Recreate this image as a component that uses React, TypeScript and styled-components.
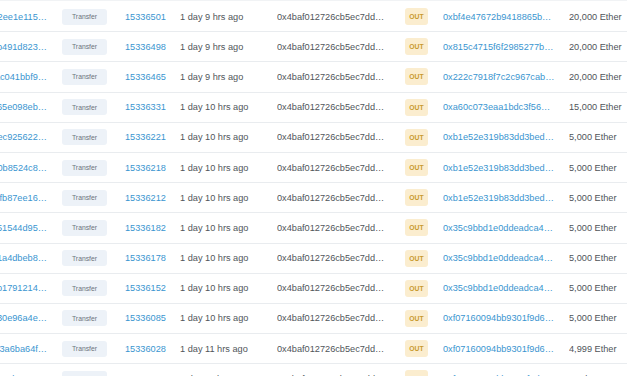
import styled, { createGlobalStyle } from "styled-components";

type TxRow = {
  hash: string;
  block: string;
  age: string;
  to: string;
  value: string;
};

const FROM = "0x4baf012726cb5ec7dd…";

const rows: TxRow[] = [
  { hash: "0x7c2ee1e115…", block: "15336501", age: "1 day 9 hrs ago", to: "0xbf4e47672b9418865b…", value: "20,000 Ether" },
  { hash: "0x1fb491d823…", block: "15336498", age: "1 day 9 hrs ago", to: "0x815c4715f6f2985277b…", value: "20,000 Ether" },
  { hash: "0x9ac041bbf9…", block: "15336465", age: "1 day 9 hrs ago", to: "0x222c7918f7c2c967cab…", value: "20,000 Ether" },
  { hash: "0x3d65e098eb…", block: "15336331", age: "1 day 10 hrs ago", to: "0xa60c073eaa1bdc3f56…", value: "15,000 Ether" },
  { hash: "0x28ec925622…", block: "15336221", age: "1 day 10 hrs ago", to: "0xb1e52e319b83dd3bed…", value: "5,000 Ether" },
  { hash: "0x6e0b8524c8…", block: "15336218", age: "1 day 10 hrs ago", to: "0xb1e52e319b83dd3bed…", value: "5,000 Ether" },
  { hash: "0x44fb87ee16…", block: "15336212", age: "1 day 10 hrs ago", to: "0xb1e52e319b83dd3bed…", value: "5,000 Ether" },
  { hash: "0xd051544d95…", block: "15336182", age: "1 day 10 hrs ago", to: "0x35c9bbd1e0ddeadca4…", value: "5,000 Ether" },
  { hash: "0x8e1a4dbeb8…", block: "15336178", age: "1 day 10 hrs ago", to: "0x35c9bbd1e0ddeadca4…", value: "5,000 Ether" },
  { hash: "0x52b1791214…", block: "15336152", age: "1 day 10 hrs ago", to: "0x35c9bbd1e0ddeadca4…", value: "5,000 Ether" },
  { hash: "0xc930e96a4e…", block: "15336085", age: "1 day 10 hrs ago", to: "0xf07160094bb9301f9d6…", value: "5,000 Ether" },
  { hash: "0x0d73a6ba64f…", block: "15336028", age: "1 day 11 hrs ago", to: "0xf07160094bb9301f9d6…", value: "4,999 Ether" },
  { hash: "0xe4a7b5190…", block: "15335990", age: "1 day 11 hrs ago", to: "0xf07160094bb9301f9d6…", value: "1 Ether" },
];

const App = () => {
  return (
    <>
      <GlobalStyle />
      <Table>
        {rows.map((r, i) => (
          <Row key={i}>
            <HashCell>
              <Link>{r.hash}</Link>
            </HashCell>
            <Cell>
              <MethodBadge>Transfer</MethodBadge>
            </Cell>
            <Cell>
              <Link>{r.block}</Link>
            </Cell>
            <Cell>{r.age}</Cell>
            <Cell>{FROM}</Cell>
            <Cell>
              <DirBadge>OUT</DirBadge>
            </Cell>
            <Cell>
              <Link>{r.to}</Link>
            </Cell>
            <Cell>{r.value}</Cell>
          </Row>
        ))}
      </Table>
    </>
  );
};

export default App;

const GlobalStyle = createGlobalStyle`
  html, body {
    margin: 0;
    padding: 0;
    background: #fff;
    overflow: hidden;
  }
  body {
    font-family: "Liberation Sans", Arial, sans-serif;
  }
`;

const Table = styled.div`
  width: calc(100% + 33px);
  margin-left: -33px;
  padding-top: 1px;
  border-top: 1px solid #f1f3f5;
`;

const Row = styled.div`
  display: grid;
  grid-template-columns: 95px 63px 55px 97px 128px 38px 126px 1fr;
  align-items: center;
  height: 30.2px;
  box-sizing: border-box;
  border-bottom: 1px solid #e9ecef;
  font-size: 9.2px;
  color: #50555a;
  white-space: nowrap;
`;

const Cell = styled.div`
  overflow: hidden;
`;

const HashCell = styled.div`
  overflow: hidden;
  text-align: right;
  padding-right: 15px;
`;

const Link = styled.span`
  color: #3a95d0;
`;

const MethodBadge = styled.span`
  display: inline-flex;
  align-items: center;
  justify-content: center;
  width: 45px;
  height: 16px;
  border-radius: 3px;
  background: #edf2f8;
  color: #6c757d;
  font-size: 6.8px;
`;

const DirBadge = styled.span`
  display: inline-flex;
  align-items: center;
  justify-content: center;
  width: 23px;
  height: 17px;
  border-radius: 3px;
  background: #fbedcf;
  color: #c99a2e;
  font-size: 6.8px;
  font-weight: 700;
`;
